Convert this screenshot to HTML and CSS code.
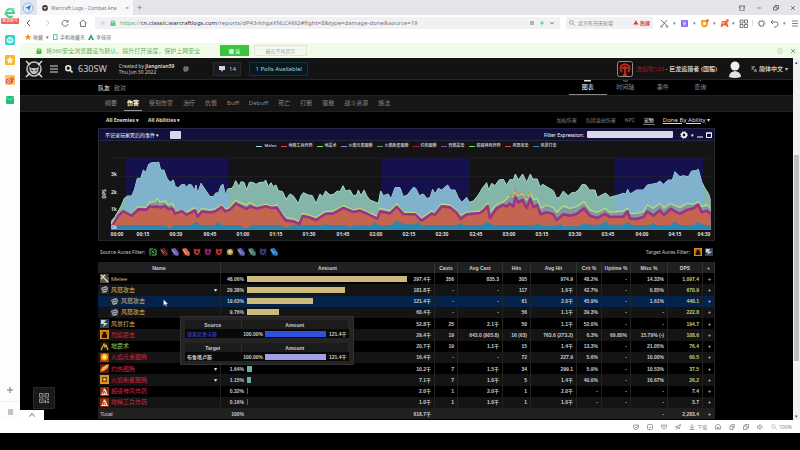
FILE: index.html
```html
<!DOCTYPE html>
<html lang="zh-CN">
<head>
<meta charset="utf-8">
<meta name="viewport" content="width=device-width, initial-scale=1">
<title>Warcraft Logs - Combat Analysis</title>
<link rel="stylesheet" href="styles.css">
</head>
<body>
<svg class="defs" aria-hidden="true">
  <symbol id="i-search" viewBox="0 0 10 10"><circle cx="4" cy="4" r="3" fill="none" stroke="currentColor"/><path d="M6.3 6.3 9.4 9.4" stroke="currentColor"/></symbol>
  <symbol id="i-aura1" viewBox="0 0 8 8"><rect width="8" height="8" fill="#1b2418"/><path d="M1 7V1h3M5 2h2v5H3" stroke="currentColor" fill="none"/><path d="M3 3l2 2" stroke="#aaa"/></symbol>
  <symbol id="i-aura2" viewBox="0 0 8 8"><rect width="8" height="8" fill="#120c10"/><path d="M0 1 4 0 8 5 7 8 3 7z" fill="currentColor"/><path d="M1 2l3 3" stroke="#ddd" opacity=".6"/></symbol>
  <symbol id="i-aura3" viewBox="0 0 8 8"><rect width="8" height="8" fill="#150a0c"/><path d="M1 1h2l1 1 1-1h2v3L5 7H3L1 5z" fill="currentColor"/><path d="M3 3h2v2H3z" fill="#201030"/></symbol>
  <symbol id="i-aura4" viewBox="0 0 8 8"><rect width="8" height="8" fill="#14100a"/><circle cx="4" cy="4" r="3" fill="currentColor"/><circle cx="4" cy="3.5" r="1.3" fill="#fff" opacity=".6"/></symbol>
  <symbol id="i-fist" viewBox="0 0 9 9"><rect width="9" height="9" fill="#20242a"/><path d="M1 3 6 1l2 2-1 4-4 1z" fill="#a8aeb6"/><path d="M2 4 7 3M3 6l4-1" stroke="#333" stroke-width=".8"/></symbol>
  <symbol id="i-sword" viewBox="0 0 9 9"><rect width="9" height="9" fill="#5c5547"/><path d="M1 1 8 8M1 5l4-4" stroke="#ddd6be" stroke-width="1.3"/><path d="M6 1h3v3z" fill="#282018"/></symbol>
  <symbol id="i-flame" viewBox="0 0 9 9"><rect width="9" height="9" fill="#c96d12"/><path d="M2 8V5l1-1V2h3v2l1 1v3z" fill="#211005"/><path d="M0 0h9v9H0z" fill="none" stroke="#f0a82a"/></symbol>
  <symbol id="i-quake" viewBox="0 0 9 9"><rect width="9" height="9" fill="#18150a"/><path d="M1 8 4 2l1 3 1-2 2 5" fill="none" stroke="#d4b93c" stroke-width="1.2"/></symbol>
  <symbol id="i-storm" viewBox="0 0 9 9"><rect width="9" height="9" fill="#344252"/><path d="M1 1h5L4 4h4L3 8l1-3H1z" fill="#c9d4e2"/></symbol>
  <symbol id="i-elem" viewBox="0 0 9 9"><rect width="9" height="9" fill="#a33b06"/><circle cx="4.500" cy="4" r="3.500" fill="#f5a91d"/><circle cx="4.500" cy="4" r="1.700" fill="#fff09a"/></symbol>
  <symbol id="i-sear" viewBox="0 0 9 9"><rect width="9" height="9" fill="#5b1d0a"/><path d="M0 8 2 3 6 1l3-1-1 4-4 3z" fill="#ef8b3a"/><path d="M2 6 7 2" stroke="#ffd99a"/></symbol>
  <symbol id="i-nova" viewBox="0 0 9 9"><rect width="9" height="9" fill="#d9962a"/><rect x="2" y="2" width="5" height="5" fill="#7a480f"/><circle cx="4.500" cy="4.500" r="1.300" fill="#f7cd5c"/></symbol>
  <symbol id="i-bomb" viewBox="0 0 9 9"><rect width="9" height="9" fill="#8e2a10"/><path d="M1 8 3 4 4 1 6 3 8 8z" fill="#f0dcc0"/><path d="M3 7 4 4l2 3" stroke="#b0421c" fill="none"/></symbol>
</svg>

<div class="browser">
  <aside class="side">
    <svg class="side-logo" viewBox="0 0 12 11"><path d="M2 6h8a4 4 0 1 0-1.200 2.900" fill="none" stroke="#46cf8c" stroke-width="2"/><path d="M0 8Q1 3 11 1" fill="none" stroke="#8be0b4"/></svg>
    <span class="side-tag">登录账号</span>
    <svg class="side-ico" viewBox="0 0 12 12"><rect x="1" y="1" width="10" height="10" rx="2" fill="#2fcfc3"/><path d="M6 2.500 9.500 5v3L6 9.700 2.500 8V5z" fill="#c9fbf2"/><path d="M4 6h4" stroke="#2fcfc3"/></svg>
    <svg class="side-ico" viewBox="0 0 12 12"><rect x="1" y="1" width="10" height="10" rx="1" fill="#fbb72b"/><path d="m6 2.500 1.100 2.400 2.500.300-1.900 1.700.5 2.600L6 8.200 3.800 9.500l.5-2.600-1.900-1.700 2.500-.3z" fill="#fff"/></svg>
    <svg class="side-ico" viewBox="0 0 12 12"><rect x="1" y="1" width="10" height="10" rx="1" fill="#fbc56c"/><ellipse cx="5.500" cy="7" rx="3.500" ry="2.700" fill="#e5493a"/><circle cx="5" cy="7" r="1.700" fill="#fff"/><circle cx="5" cy="7" r=".8" fill="#222"/><path d="M7 3q3 0 2.500 3" stroke="#e5493a" fill="none"/></svg>
    <svg class="side-ico" viewBox="0 0 12 12"><rect x="2" y="2" width="8" height="8" rx="1" fill="#21bd7b"/><path d="m2 3 4 3 4-3" stroke="#7fe6b6" fill="none"/></svg>
    <span class="side-space"></span>
    <button class="side-btn" aria-label="添加"><svg viewBox="0 0 6 6"><path d="M3 0v6M0 3h6" stroke="#777"/></svg></button>
    <button class="side-btn side-list" aria-label="列表"><svg viewBox="0 0 6 6"><path d="M1 1h5M1 3h5M1 5h5" stroke="#888"/></svg></button>
  </aside>

  <div class="main">
    <div class="tabbar">
      <svg class="pin" viewBox="0 0 12 12"><circle cx="6" cy="6" r="5" fill="#d9ecfb" stroke="#8fb9e4"/><path d="M3 6 9 3 7 9 6 6.500z" fill="#2878d4"/></svg>
      <div class="tab"><svg class="i6" viewBox="0 0 6 6"><circle cx="3" cy="3" r="2.900" fill="#333"/><path d="M1 2h4L3 5z" fill="#bbb"/></svg><span class="tab-title">Warcraft Logs - Combat Ana</span><button aria-label="关闭标签">×</button></div>
      <button class="newtab" aria-label="新标签">+</button>
      <div class="winctl">
        <svg class="i6" viewBox="0 0 6 6"><path d="M0 1h6v1H5v4H1V2H0z" fill="none" stroke="#555" stroke-width=".8"/></svg>
        <svg class="i6" viewBox="0 0 6 6"><path d="M1 3h4" stroke="#777" stroke-width=".8"/></svg>
        <svg class="i6" viewBox="0 0 6 6"><path d="M.5 2H4v3H.5zM2 2V.5h3.500V4H4" fill="none" stroke="#555" stroke-width=".8"/></svg>
        <svg class="i6" viewBox="0 0 6 6"><path d="m1 1 4 4M5 1 1 5" stroke="#666" stroke-width=".8"/></svg>
      </div>
    </div>

    <div class="urlbar">
      <div class="navbtns">
        <svg class="i8" viewBox="0 0 8 8"><path d="M5 1 2 4l3 3" fill="none" stroke="#555"/></svg>
        <svg class="i8" viewBox="0 0 8 8"><path d="m3 1 3 3-3 3" fill="none" stroke="#ccc"/></svg>
        <svg class="i8" viewBox="0 0 8 8"><path d="M6.500 2.500A3 3 0 1 0 7 5M7 1v2H5" fill="none" stroke="#555" stroke-width=".8"/></svg>
        <svg class="i8" viewBox="0 0 8 8"><path d="M.5 4 4 1l3.500 3M1.500 3.500v4h5v-4" fill="none" stroke="#555" stroke-width=".8"/></svg>
      </div>
      <div class="address">
        <svg class="i6" viewBox="0 0 6 6"><circle cx="3" cy="3" r="2" fill="#cfdaf2"/></svg>
        <svg class="i6" viewBox="0 0 6 6"><rect x=".5" y="2.500" width="5" height="3.500" fill="#5ec79a"/><path d="M1.500 3V1h3v2" fill="none" stroke="#5ec79a"/></svg>
        <span class="url"><span class="url-s">https://</span><b>cn.classic.warcraftlogs.com</b>/reports/dP43rkhgaXNLCAM2#fight=8&amp;type=damage-done&amp;source=19</span>
        <svg class="i6" viewBox="0 0 6 6"><rect x="1" y="1" width="4" height="4" fill="#b3b3b3"/></svg>
        <svg class="i6" viewBox="0 0 6 6"><path d="M4 0 1 3.500h2L2 6l3-3.500H3z" fill="#2fc48c"/></svg>
        <svg class="i6" viewBox="0 0 6 6"><path d="m1 2 2 2 2-2" fill="none" stroke="#666" stroke-width=".8"/></svg>
      </div>
      <div class="search"><svg class="i6 grey"><use href="#i-search"/></svg><input aria-label="搜索" value="北京昨日无新增"><span class="hot"><svg class="i6" viewBox="0 0 6 6"><path d="M0 5 2 2l1-2 .7 2L6 5 3.500 4 3 6 2 4z" fill="#e5352e"/></svg>热搜</span></div>
      <div class="tools">
        <svg class="i9" viewBox="0 0 9 9"><path d="m1 1 6 6M7 1 2 7" stroke="#555" stroke-width=".8"/><circle cx="1.500" cy="7.500" r="1" fill="none" stroke="#555" stroke-width=".6"/><circle cx="7" cy="7.500" r="1" fill="none" stroke="#555" stroke-width=".6"/></svg><i>▾</i>
        <svg class="i9" viewBox="0 0 9 9"><rect x="1" y="1" width="7" height="7" rx="1" fill="#8b6be8"/><path d="M3 3h3M3 4.500h3M3 6h3" stroke="#fff" stroke-width=".7"/></svg><i>▾</i>
        <svg class="i9" viewBox="0 0 9 9"><path d="M1 1h7v4Q8 8 4.500 8.500 1 8 1 5z" fill="#fba41d"/><circle cx="4.500" cy="4.500" r="1.600" fill="#fff"/><circle cx="7.500" cy="1.500" r="1.200" fill="#ef4b2d"/></svg><i>▾</i>
        <svg class="i9" viewBox="0 0 9 9"><path d="M2 2h5l1.500 6H7L6 6.500H3L2 8H.5z" fill="#f1652b"/><path d="M2.500 4h2" stroke="#fff"/><circle cx="7.500" cy="1.500" r="1.200" fill="#ef4b2d"/></svg><i>▾</i>
        <svg class="i9" viewBox="0 0 9 9"><path d="M1 1h3v3H1zM5.500 1h3v3h-3zM1 5.500h3v3H1zM5.500 5.500h3v3h-3z" fill="none" stroke="#555" stroke-width=".8"/></svg>
        <span class="bar"></span>
        <svg class="i9" viewBox="0 0 9 9"><circle cx="4.500" cy="4.500" r="2.500" fill="none" stroke="#555" stroke-width=".8"/><circle cx="4.500" cy="4.500" r="3.500" fill="none" stroke="#777" stroke-dasharray="1 1.750"/></svg>
        <svg class="i9" viewBox="0 0 9 9"><path d="M3 1 1 3l2 2M1 3h5q2 0 2 2T6 8H4" fill="none" stroke="#555" stroke-width=".8"/></svg><i>▾</i>
        <svg class="i9" viewBox="0 0 9 9"><path d="M2 2h6M2 4.500h6M2 7h6" stroke="#666" stroke-width=".8"/></svg>
      </div>
    </div>

    <div class="bookmarks">
      <a href="#"><svg class="i6" viewBox="0 0 6 6"><path d="m3 0 1 2 2 .200L4.500 3.700 5 6 3 4.800 1 6l.500-2.300L0 2.200 2 2z" fill="#f78b1f"/></svg>收藏</a><span class="dot">▾</span>
      <a href="#"><svg class="i6" viewBox="0 0 6 6"><rect x="1.500" y=".5" width="3.500" height="5" fill="none" stroke="#58c99a"/></svg>手机收藏夹</a>
      <a href="#"><svg class="i6" viewBox="0 0 6 6"><path d="M0 6 3 0l3 6H4L3 3.500 2 6z" fill="#23a95c"/></svg>李佳琦</a>
    </div>

    <div class="notice">
      <svg class="i6" viewBox="0 0 6 6"><rect x=".5" y="2.500" width="5" height="3.500" fill="#3eb84d"/><path d="M1.500 3V1h3v2" fill="none" stroke="#3eb84d"/></svg>
      <span class="notice-text">将360安全浏览器设为默认，提升打开速度，保护上网安全</span>
      <button class="yes">确 认</button><button class="no">最近不再提示</button>
      <span class="notice-end"><svg class="i6" viewBox="0 0 6 6"><circle cx="3" cy="3" r="2.500" fill="none" stroke="#bbccb4" stroke-width=".8"/><path d="M3 1.500v3" stroke="#bbccb4" stroke-width=".8"/></svg><svg class="i6" viewBox="0 0 6 6"><path d="m1 1 4 4M5 1 1 5" stroke="#4fb884"/></svg></span>
    </div>

    <div class="viewport">
      <div class="page">
        <header class="top">
          <svg class="logo" viewBox="0 0 18 18"><circle cx="9" cy="9" r="7" fill="#1b1b1b" stroke="#c5c5c5" stroke-width="1.500"/><path d="m1 1 4 4M17 1l-4 4M1 17l4-4M17 17l-4-4" stroke="#ddd" stroke-width="1.500"/><path d="M4 6.500 6 8h6l2-1.500-1 5-2 2.500H7l-2-2.500z" fill="#bdbdbd"/><path d="M6 9.500 8 11M12 9.500 10 11M7 5h4" stroke="#222"/></svg>
          <svg class="i8 white" viewBox="0 0 8 8"><path d="M0 1h8M0 4h8M0 7h8" stroke="#ddd"/></svg>
          <svg class="i8 white bold"><use href="#i-search"/></svg>
          <span class="report">630SW</span>
          <span class="created">Created by <b>jiangnian59</b><br>Thu Jun 30 2022</span>
          <svg class="i6" viewBox="0 0 6 6"><path d="M1 1h4v3L4 5H1z" fill="#333" stroke="#aaa" stroke-width=".8"/><path d="M2 3h2" stroke="#ddd" stroke-width=".8"/></svg>
          <button class="chat"><svg class="i6" viewBox="0 0 6 6"><path d="M0 0h6v4H4L3 6 2 4H0z" fill="#d5d0ee"/></svg>14</button>
          <button class="polls">1 Polls Available!</button>
          <div class="who">
            <svg class="crest" viewBox="0 0 16 16"><rect x=".5" y=".5" width="15" height="15" rx="2" fill="#1c0808" stroke="#8d8d8d"/><path d="M5 11a4.500 4.500 0 1 1 6 0" fill="none" stroke="#b52b1c" stroke-width="2"/><path d="M8 5v9M5 7h2M9 7h2M6 14h4" stroke="#d83b26" stroke-width="1.500"/></svg>
            <span><span class="guild">洗剪吹123</span> - <b>巨龙追猎者 (国服)</b></span>
            <svg class="avatar" viewBox="0 0 16 18"><circle cx="8" cy="6" r="4.500" fill="#f0f0f0"/><path d="M2 17q0-5 6-6 6 1 6 6-6 2-12 0z" fill="#e2e2e2"/></svg>
            <a href="#" class="lang"><svg class="i6" viewBox="0 0 6 6"><path d="M0 1h4M2 0v1M.5 4 3 1M1 2l2 2M3 6l1.500-3L6 6M3.500 5h2" fill="none" stroke="#bbb" stroke-width=".7"/></svg><b>简体中文</b>▾</a>
          </div>
        </header>

        <div class="strip"><div class="wrap row1">
          <a href="#" class="on">队友</a><a href="#">敌对</a>
          <nav class="views">
            <a href="#" class="on"><svg viewBox="0 0 9 3"><path d="M1 0h7v1.500H1z" fill="#ddd"/></svg>图表</a>
            <a href="#"><svg viewBox="0 0 9 3"><path d="M2 0q2.500 3 5 0" fill="none" stroke="#888"/></svg>时间轴</a>
            <a href="#"><svg viewBox="0 0 9 3"></svg>事件</a>
            <a href="#"><svg viewBox="0 0 9 3"><path d="M4 0h1v1H4z" fill="#888"/></svg>查询</a>
          </nav>
        </div></div>

        <div class="strip types"><nav class="wrap row2">
          <a href="#">摘要</a><a href="#" class="on">伤害</a><a href="#">受到伤害</a><a href="#">治疗</a><a href="#">仇恨</a><a href="#">Buff</a><a href="#">Debuff</a><a href="#">死亡</a><a href="#">打断</a><a href="#">驱散</a><a href="#">战斗资源</a><a href="#">施法</a>
        </nav></div>

        <div class="wrap row3">
          <button>All Enemies ▾</button><button>All Abilities ▾</button>
          <div class="opts"><a href="#">加权伤害</a><a href="#">包括溢出伤害</a><a href="#">NPC</a><a href="#" class="on">宠物</a><a href="#" class="by"><u>Done By Ability</u> ▾</a></div>
        </div>

        <section class="wrap panel">
          <div class="panel-head">
            <button>不记录玩家死后的事件 ▾</button><input class="mini" aria-label="事件">
            <label for="expr">Filter Expression:</label><input id="expr" class="expr">
            <svg class="i8" viewBox="0 0 8 8"><circle cx="4" cy="4" r="2.200" fill="none" stroke="#fff" stroke-width="1.600"/><circle cx="4" cy="4" r="3.300" fill="none" stroke="#fff" stroke-dasharray="1.300 1.300"/></svg><span class="caret">▾</span>
            <svg class="i6" viewBox="0 0 6 6"><path d="M0 5h6" stroke="#fff"/></svg>
            <svg class="i6" viewBox="0 0 6 6"><path d="M.5 1h5v4.500h-5zM0 1h6" fill="none" stroke="#fff"/></svg>
          </div>
          <ul class="legend">
            <li class="k1">Melee</li><li class="k2">地精工兵炸药</li><li class="k3">地震术</li><li class="k4">火焰元素图腾</li><li class="k5">火焰新星图腾</li><li class="k6">灼热图腾</li><li class="k7">烈焰震击</li><li class="k3">超级神风炸药</li><li class="k2">风怒攻击</li><li class="k8">风暴打击</li>
          </ul>
          <svg class="chart" viewBox="0 0 617 90">
            <defs>
              <clipPath id="total"><path d="M63 290 75 275 85 258 95 240 103 220 112 213 125 213 133 195 142 160 152 160 160 135 168 142 176 118 185 113 200 113 206 111 212 135 222 135 230 158 240 172 250 165 256 185 265 188 273 180 283 178 289 187 297 178 305 180 313 197 318 180 323 205 333 175 343 190 350 200 360 215 370 215 378 203 385 205 393 182 399 178 406 210 413 192 416 190V314H63z M874 198 880 212 895 207 903 222 915 188 930 188 940 215 952 210 970 187 977 190 988 212 1000 207 1010 220 1020 218 1028 193 1035 207 1045 190 1055 195 1073 180 1082 195 1095 195 1105 218 1115 232 1130 217 1138 232V314H874z M1574 213 1585 210 1600 205 1608 207 1613 193 1620 207 1640 195 1660 195 1672 180 1700 175 1710 168 1720 178 1735 165 1747 165 1755 140 1770 155 1780 152 1795 155 1805 138 1818 137 1825 133 1835 170 1840 180V314H1574z"/></clipPath>
              <clipPath id="plot"><path d="M63 99H1862V314H63z"/></clipPath>
            </defs>
            <g transform="translate(-8 -26) scale(.333333)">
              <path class="phase" d="M107 99H416V314H107zM874 99H1138V314H874zM1574 99H1840V314H1574z"/>
              <path class="gridline" d="M63 99H1862M63 155H1862M63 208H1862M63 261H1862"/>
              <g clip-path="url(#plot)">
                <path class="melee" d="M63 330V290L75 275 85 258 95 240 103 220 112 213 125 213 133 195 142 160 152 160 160 135 168 142 176 118 185 113 200 113 206 111 212 135 222 135 230 158 240 172 250 165 256 185 265 188 273 180 283 178 289 187 297 178 305 180 313 197 318 180 323 205 333 175 343 190 350 200 360 215 370 215 378 203 385 205 393 182 399 178 406 210 413 192 425 190 431 182 437 167 447 185 453 170 462 172 470 195 478 172 488 172 498 178 510 172 520 172 527 165 535 185 543 173 550 185 558 180 565 197 578 200 588 223 600 207 610 213 625 235 633 213 640 203 655 210 667 212 678 235 690 207 698 215 707 198 720 210 730 208 742 198 750 200 759 182 767 198 780 195 790 212 800 210 805 195 813 212 822 195 830 212 840 225 865 235 872 198 880 212 895 207 903 222 915 188 930 188 940 215 952 210 970 187 977 190 988 212 1000 207 1010 220 1020 218 1028 193 1035 207 1045 190 1055 195 1073 180 1082 195 1095 195 1105 218 1115 232 1130 217 1138 232 1150 228 1165 210 1178 188 1190 173 1196 195 1205 175 1215 182 1227 165 1240 163 1250 180 1260 163 1270 165 1276 147 1285 165 1298 147 1310 172 1321 147 1328 162 1342 162 1350 185 1358 178 1370 185 1390 197 1400 220 1410 215 1420 198 1435 213 1445 203 1455 203 1465 195 1477 178 1488 180 1498 195 1515 195 1522 217 1535 210 1547 204 1560 217 1585 210 1600 205 1608 207 1613 193 1620 207 1640 195 1660 195 1672 180 1700 175 1710 168 1720 178 1735 165 1747 165 1755 140 1770 155 1780 152 1795 155 1805 138 1818 137 1825 133 1835 170 1845 190 1855 205 1862 225V330z"/>
                <path class="melee-phase" clip-path="url(#total)" d="M107 99H416V314H107zM874 99H1138V314H874zM1574 99H1840V314H1574z"/>
                <path id="abil" class="quake" d="M50 340 63 297 85 270 100 258 125 268 145 245 170 248 178 232 195 230 202 220 210 232 225 228 235 240 248 235 255 260 275 255 290 262 315 248 323 268 335 250 360 255 375 252 395 240 405 252 420 248 437 225 455 235 470 240 480 232 500 245 527 238 545 245 560 240 575 262 588 278 610 282 628 290 638 265 655 270 678 278 705 260 730 258 760 242 790 255 810 250 835 262 862 275 870 250 900 258 920 237 940 262 975 262 995 280 1025 258 1035 262 1055 237 1080 240 1100 258 1112 270 1130 262 1170 258 1185 245 1193 235 1200 262 1220 238 1240 230 1250 222 1258 212 1270 215 1276 198 1285 212 1298 205 1310 225 1321 202 1330 225 1342 220 1352 250 1370 240 1390 248 1400 262 1420 243 1440 250 1460 245 1482 230 1500 255 1522 262 1545 250 1560 262 1600 258 1613 250 1620 265 1640 265 1660 260 1672 240 1690 250 1710 235 1722 250 1742 235 1755 242 1770 248 1790 235 1810 237 1825 230 1835 245 1850 240 1862 248 1880 340z"/>
                <path class="windfury" transform="translate(0 12)" d="M50 340 63 297 85 260 100 247 125 260 145 241 170 242 178 232 195 234 202 232 210 236 225 231 235 240 248 239 255 254 275 246 290 257 315 244 323 263 335 248 360 250 375 248 395 234 405 247 420 242 437 224 455 233 470 240 480 232 500 238 527 232 545 237 560 235 575 258 588 275 610 277 628 285 638 261 655 264 678 273 705 255 730 253 760 237 790 249 810 245 835 256 862 269 870 247 900 253 920 233 940 255 975 256 995 275 1025 254 1035 257 1055 232 1080 235 1100 251 1112 270 1130 256 1170 252 1185 240 1193 231 1200 268 1220 238 1240 228 1250 233 1258 224 1270 232 1276 205 1285 220 1298 213 1310 237 1321 210 1330 235 1342 228 1352 256 1370 250 1390 256 1400 273 1420 256 1440 260 1460 255 1482 238 1500 260 1522 267 1545 255 1560 264 1600 263 1613 247 1620 269 1640 270 1660 264 1672 248 1690 260 1710 244 1722 258 1742 239 1755 247 1770 254 1790 243 1810 238 1825 227 1835 250 1850 245 1862 253 1880 340z"/>
                <path class="storm" d="M63 320V300H220L232 303 240 312 250 300H305L318 290 330 300H375L385 290 395 300H450L460 309 475 309 482 300H570L590 309 605 300H700L707 296 715 300H770L780 307 790 301H845L855 290 865 300H903L920 288 945 298H975L984 290 992 300H1100L1110 295 1120 300H1175L1193 290 1210 300H1330L1345 297 1360 302H1400L1412 297 1420 304H1470L1480 295 1500 299H1530L1547 289 1560 299H1600L1613 291 1625 300H1680L1690 295 1700 300H1740L1755 290 1770 300H1810L1825 290 1840 300H1862V320z"/>
                <path class="bursts" d="M1258 210 1270 215 1276 193 1285 210 1298 200 1310 222 1321 200"/>
              </g>
            </g>
            <g class="axis">
              <text x="13" y="25">3k</text><text x="13" y="43">2k</text><text x="13" y="60">1k</text><text x="13" y="78">0k</text>
              <text class="dps" transform="translate(8 43) rotate(-90)">DPS</text>
            </g>
            <g class="axis ticks">
              <text x="19" y="85">00:00</text><text x="45" y="85">00:15</text><text x="78" y="85">00:30</text><text x="112" y="85">00:45</text><text x="145" y="85">01:00</text><text x="178" y="85">01:15</text><text x="211" y="85">01:30</text><text x="245" y="85">01:45</text><text x="278" y="85">02:00</text><text x="311" y="85">02:15</text><text x="344" y="85">02:30</text><text x="378" y="85">02:45</text><text x="411" y="85">03:00</text><text x="444" y="85">03:15</text><text x="477" y="85">03:30</text><text x="510" y="85">03:45</text><text x="544" y="85">04:00</text><text x="577" y="85">04:15</text><text x="606" y="85">04:30</text>
            </g>
          </svg>
        </section>

        <div class="wrap auras">
          <span>Source Auras Filter:</span>
          <div class="aura-list">
            <svg class="a1"><use href="#i-aura1"/></svg><svg class="a2"><use href="#i-aura2"/></svg><svg class="a3"><use href="#i-aura2"/></svg><svg class="a4"><use href="#i-aura2"/></svg><svg class="a5"><use href="#i-aura3"/></svg><svg class="a6"><use href="#i-aura3"/></svg><svg class="a7"><use href="#i-aura3"/></svg><svg class="a8"><use href="#i-aura4"/></svg><svg class="a3"><use href="#i-aura2"/></svg><svg class="a9"><use href="#i-aura2"/></svg><svg class="a10"><use href="#i-aura3"/></svg><svg class="a11"><use href="#i-aura2"/></svg>
          </div>
          <span class="target">Target Auras Filter:</span>
          <div class="aura-list"><svg><use href="#i-flame"/></svg><svg><use href="#i-storm"/></svg></div>
        </div>

        <div class="wrap tablebox">
          <table class="data">
            <colgroup><col class="c-name"><col class="c-amount"><col class="c-casts"><col class="c-cast"><col class="c-hits"><col class="c-hit"><col class="c-crit"><col class="c-up"><col class="c-miss"><col class="c-dps"><col class="c-plus"></colgroup>
            <thead><tr><th>Name</th><th>Amount</th><th>Casts</th><th>Avg Cast</th><th>Hits</th><th>Avg Hit</th><th>Crit %</th><th>Uptime %</th><th>Miss %</th><th>DPS</th><th>+</th></tr></thead>
            <tbody>
              <tr><td><div class="n phys"><svg><use href="#i-sword"/></svg>Melee</div></td><td><div class="amt"><span>48.06%</span><i class="meter"><i style="width:100%"></i></i><span>297.4千</span></div></td><td>356</td><td>835.3</td><td>305</td><td>974.9</td><td>48.2%</td><td>-</td><td>14.33%</td><td>1,097.4</td><td>+</td></tr>
              <tr><td><div class="n phys"><svg><use href="#i-fist"/></svg>风怒攻击<span class="open">▾</span></div></td><td><div class="amt"><span>29.38%</span><i class="meter"><i style="width:61%"></i></i><span>181.8千</span></div></td><td>-</td><td>-</td><td>117</td><td>1.6千</td><td>42.7%</td><td>-</td><td>0.85%</td><td>670.9</td><td>+</td></tr>
              <tr class="hover"><td><div class="n phys sub"><svg><use href="#i-fist"/></svg>风怒攻击</div></td><td><div class="amt"><span>19.63%</span><i class="meter"><i style="width:41%"></i></i><span>121.4千</span></div></td><td>-</td><td>-</td><td>61</td><td>2.0千</td><td>45.9%</td><td>-</td><td>1.61%</td><td>448.1</td><td>+</td></tr>
              <tr class="alt"><td><div class="n phys sub"><svg><use href="#i-fist"/></svg>风怒攻击</div></td><td><div class="amt"><span>9.76%</span><i class="meter"><i style="width:20%"></i></i><span>60.4千</span></div></td><td>-</td><td>-</td><td>56</td><td>1.1千</td><td>39.3%</td><td>-</td><td>-</td><td>222.8</td><td>+</td></tr>
              <tr><td><div class="n phys"><svg><use href="#i-storm"/></svg>风暴打击</div></td><td><div class="amt"><span>8.53%</span><i class="meter"><i style="width:18%"></i></i><span>52.8千</span></div></td><td>25</td><td>2.1千</td><td>50</td><td>1.1千</td><td>52.0%</td><td>-</td><td>-</td><td>194.7</td><td>+</td></tr>
              <tr><td><div class="n fire"><svg><use href="#i-flame"/></svg>烈焰震击</div></td><td><div class="amt"><span>4.76%</span><i class="meter"><i style="width:10%"></i></i><span>29.4千</span></div></td><td>19</td><td>643.0 (905.8)</td><td>16 (63)</td><td>763.6 (273.2)</td><td>6.3%</td><td>69.80%</td><td>15.79% (-)</td><td>108.6</td><td>+</td></tr>
              <tr><td><div class="n nature"><svg><use href="#i-quake"/></svg>地震术</div></td><td><div class="amt"><span>3.35%</span><i class="meter"><i style="width:7%"></i></i><span>20.7千</span></div></td><td>19</td><td>1.1千</td><td>15</td><td>1.4千</td><td>13.3%</td><td>-</td><td>21.05%</td><td>76.4</td><td>+</td></tr>
              <tr><td><div class="n fire"><svg><use href="#i-elem"/></svg>火焰元素图腾</div></td><td><div class="amt pet"><span>2.65%</span><i class="meter"><i style="width:6%"></i></i><span>16.4千</span></div></td><td>-</td><td>-</td><td>72</td><td>227.9</td><td>5.6%</td><td>-</td><td>10.00%</td><td>60.5</td><td>+</td></tr>
              <tr><td><div class="n fire"><svg><use href="#i-sear"/></svg>灼热图腾<span class="open">▾</span></div></td><td><div class="amt pet"><span>1.64%</span><i class="meter"><i style="width:3.400%"></i></i><span>10.2千</span></div></td><td>7</td><td>1.5千</td><td>34</td><td>299.1</td><td>5.9%</td><td>-</td><td>10.53%</td><td>37.5</td><td>+</td></tr>
              <tr><td><div class="n fire"><svg><use href="#i-nova"/></svg>火焰新星图腾<span class="open">▾</span></div></td><td><div class="amt pet"><span>1.15%</span><i class="meter"><i style="width:2.400%"></i></i><span>7.1千</span></div></td><td>7</td><td>1.0千</td><td>5</td><td>1.4千</td><td>40.0%</td><td>-</td><td>16.67%</td><td>26.2</td><td>+</td></tr>
              <tr><td><div class="n fire"><svg><use href="#i-bomb"/></svg>超级神风炸药</div></td><td><div class="amt bomb"><span>0.32%</span><i class="meter"><i style="width:.7%"></i></i><span>2.0千</span></div></td><td>1</td><td>2.0千</td><td>1</td><td>2.0千</td><td>-</td><td>-</td><td>-</td><td class="plain">7.4</td><td>+</td></tr>
              <tr><td><div class="n fire"><svg><use href="#i-bomb"/></svg>地精工兵炸药</div></td><td><div class="amt bomb"><span>0.16%</span><i class="meter"><i style="width:.4%"></i></i><span>1.0千</span></div></td><td>1</td><td>1.0千</td><td>1</td><td>1.0千</td><td>-</td><td>-</td><td>-</td><td class="plain">3.7</td><td>+</td></tr>
            </tbody>
            <tfoot><tr><td><div class="n">Total</div></td><td><div class="amt"><span>100%</span><i class="meter"></i><span>618.7千</span></div></td><td></td><td></td><td></td><td></td><td></td><td></td><td>-</td><td>2,283.4</td><td>+</td></tr></tfoot>
          </table>

          <div class="tip">
            <table><thead><tr><th>Source</th><th>Amount</th></tr></thead><tbody><tr><td class="src">德莱尼恩卡斯</td><td><div class="amt"><span>100.00%</span><i class="meter blue"></i><span>121.4千</span></div></td></tr></tbody></table>
            <table><thead><tr><th>Target</th><th>Amount</th></tr></thead><tbody><tr><td>布鲁塔卢斯</td><td><div class="amt"><span>100.00%</span><i class="meter lilac"></i><span>121.4千</span></div></td></tr></tbody></table>
          </div>
          <svg class="pointer" viewBox="0 0 6 8"><path d="M.5.5v6l1.500-1.200L3 7.500l1-.5-1-2h2z" fill="#fff" stroke="#456" stroke-width=".4"/></svg>
        </div>
        <div class="qr"><svg viewBox="0 0 11 11"><path d="M.5.5h4v4h-4zM6.500.5h4v4h-4zM.5 6.500h4v4h-4z" fill="none" stroke="#999"/><path d="M2 2h1v1H2zM8 2h1v1H8zM2 8h1v1H2zM6 6h2v1H6zM9 6h2v2H9zM6 8h2v3H6zM9 9h2v2H9z" fill="#999"/></svg></div>
        <button class="pop" aria-label="展开"><svg viewBox="0 0 6 4"><path d="m.5 3.500 2.500-3 2.500 3" fill="none" stroke="#666"/></svg></button>
      </div>
      <div class="scroll"><span>▴</span><i></i><span>▾</span></div>
    </div>
  </div>
</div>

<footer class="status">
  <svg viewBox="0 0 6 6"><path d="M.5 1h5v2q0 2-2.500 3Q.5 5 .5 3z"/><path d="m2 3 1 1 2-2"/></svg>
  <svg viewBox="0 0 6 6"><rect x=".5" y=".5" width="5" height="5" rx="1"/><path d="M2 3q1 2 2 0"/></svg>
  <svg viewBox="0 0 6 6"><path d="M3 5.500.5 3V1h2L3 2l.5-1h2v2z"/><path d="M2 3h2"/></svg>
  <svg viewBox="0 0 6 6"><path d="M.5 3 5.500.5 4 5 3 3.500zM3 3.500 1 5.500"/></svg>
  <span class="dl"><svg viewBox="0 0 6 6"><path d="M3 0v4M1 2.500l2 2 2-2M.5 5.500h5"/></svg>下载</span>
  <svg viewBox="0 0 6 6"><path d="M.5 5V3a2.500 2.500 0 0 1 5 0v2zM2 5V3.500h2V5"/></svg>
  <svg viewBox="0 0 6 6"><path d="M1 2h3v3.500H1zM2 2l1-1.500h2.500L5 4H4"/></svg>
  <svg viewBox="0 0 6 6"><path d="M.5 2h3.500v3.500H.5zM2 2V.5h3.500V4H4"/></svg>
  <svg viewBox="0 0 6 6"><path d="M.5 2h1L3 .5v5L1.500 4h-1zM4.500 1.500q1.500 1.500 0 3"/></svg>
  <span class="dl zoom"><svg><use href="#i-search"/></svg>100%</span>
</footer>
</body>
</html>
```
FILE: styles.css
```css
* { box-sizing: border-box; }
body { margin: 0; background: #000; font: 6px/8px "Noto Sans", "Noto Sans CJK SC", sans-serif; color: #ccc; }
button, input { font: inherit; color: inherit; border: 0; padding: 0; margin: 0; background: none; }
a { color: inherit; text-decoration: none; }
svg { display: block; flex: none; }
i { font-style: normal; }
.defs { position: absolute; width: 0; height: 0; }
.i6 { width: 6px; height: 6px; }
.i8 { width: 8px; height: 8px; }
.i9 { width: 9px; height: 9px; }
.grey { color: #777; }
.white { color: #e4e4e4; }
.bold { stroke-width: 2; }

.browser { display: flex; }
.side { width: 20px; background: #fdfdfd; display: flex; flex-direction: column; align-items: center; padding: 7px 0 5px; }
.side-logo { width: 12px; height: 11px; }
.side-tag { background: #f0614f; color: #fff; font-size: 4px; line-height: 6px; padding: 0 1px; border-radius: 1px; margin-bottom: 10px; }
.side-ico { width: 12px; height: 12px; margin-bottom: 8px; }
.side-space { flex: 1; }
.side-btn { padding: 8px 7px; }
.side-btn svg { width: 6px; height: 6px; }
.side-list { padding: 7px 7px 0; border-top: 1px solid #eee; }
.main { flex: 1; min-width: 0; }

.tabbar { height: 15px; background: #e4e4ea; display: flex; align-items: center; color: #777; }
.pin { width: 12px; height: 12px; margin: 0 3px 0 2px; }
.tab { height: 15px; width: 96px; background: #f8f8fa; display: flex; align-items: center; gap: 3px; padding: 0 4px 0 5px; }
.tab-title { flex: 1; white-space: nowrap; font-size: 5px; }
.newtab { font-size: 9px; margin-left: 4px; }
.winctl { margin-left: auto; display: flex; gap: 11px; padding-right: 4px; }

.urlbar { height: 16px; background: #fff; display: flex; align-items: center; color: #777; }
.navbtns { display: flex; gap: 10px; width: 75px; padding-left: 5px; }
.address { flex: 1; min-width: 0; height: 12px; background: #f1f1f4; display: flex; align-items: center; gap: 4px; padding: 0 5px; }
.url { flex: 1; overflow: hidden; white-space: nowrap; }
.url b { font-weight: 400; color: #333; }
.url-s { color: #43bf8a; }
.search { width: 87px; height: 12px; margin: 0 7px 0 6px; background: #f1f1f4; display: flex; align-items: center; gap: 3px; padding: 0 3px; font-size: 5px; }
.search input { flex: 1; min-width: 0; color: #888; }
.hot { color: #e5352e; font-weight: 700; display: flex; align-items: center; gap: 1px; }
.tools { display: flex; align-items: center; justify-content: space-between; width: 140px; padding-right: 1px; font-size: 5px; }
.bar { width: 1px; height: 6px; background: #ddd; }

.bookmarks { height: 12px; background: #fff; color: #666; display: flex; align-items: center; gap: 3px; padding-left: 5px; font-size: 5px; }
.bookmarks a { display: flex; align-items: center; gap: 2px; }
.notice { height: 15px; background: #f1fce8; color: #66ae72; display: flex; align-items: center; padding: 0 4px 0 16px; }
.notice-text { margin: 0 13px 0 4px; width: 161px; white-space: nowrap; }
.notice button { height: 11px; font-size: 5px; }
.yes { width: 29px; background: #3ac43c; color: #fff; font-weight: 700; }
.notice .no { width: 53px; margin-left: 5px; background: #f3f8ef; color: #aaa; border: 1px solid #dde5d8; }
.notice-end { display: flex; gap: 7px; margin-left: auto; }

.viewport { display: flex; }
.page { flex: 1; min-width: 0; position: relative; background: #000; }
.scroll { width: 7px; background: #f1f1f1; color: #555; font-size: 5px; text-align: center; display: flex; flex-direction: column; justify-content: space-between; }
.scroll i { height: 206px; margin: 89px 1px auto; background: #c1c1c1; }
.wrap { width: 80%; max-width: 617px; margin: 0 auto; }

.top { height: 22px; background: #131313; border-bottom: 1px solid #262620; display: flex; align-items: center; padding-left: 5px; white-space: nowrap; }
.logo { width: 18px; height: 18px; margin-right: 7px; }
.top .bold { margin-left: 7px; }
.report { font-size: 9px; margin: 0 12px 0 5px; }
.created { font-size: 5px; line-height: 6px; margin-right: 9px; }
.chat { display: flex; align-items: center; justify-content: center; gap: 4px; width: 28px; height: 14px; margin-left: 24px; background: #1b1b1e; border: 1px solid #2a2a2d; }
.polls { height: 14px; padding: 0 5px; margin-left: 8px; background: #06191f; border: 1px solid #10343d; color: #b4cdd2; }
.who { margin-left: auto; display: flex; align-items: center; padding-right: 5px; }
.crest { width: 16px; height: 16px; margin-right: 3px; }
.guild { color: #a02228; }
.avatar { width: 16px; height: 18px; margin: 0 8px 0 10px; }
.lang { display: flex; align-items: center; gap: 2px; }

.strip { border-bottom: 1px solid #222; color: #888; }
.row1 { height: 15px; display: flex; align-items: center; gap: 4px; }
.strip .on { color: #fff; }
.views { margin: 0 -4px 0 auto; width: 150px; display: grid; grid-template-columns: repeat(4, 1fr); text-align: center; }
.views a { height: 15px; border-bottom: 1px solid transparent; line-height: 9px; }
.views svg { width: 9px; height: 3px; margin: 0 auto; }
.views .on { border-color: #888; }
.types { background: #161616; }
.row2 { display: flex; gap: 4px; padding-left: 4px; }
.row2 a { line-height: 14px; padding: 0 3px; border-bottom: 1px solid transparent; }
.row2 .on { border-color: #999; font-weight: 700; }
.row3 { height: 16px; display: flex; align-items: center; gap: 9px; padding: 0 4px 0 8px; font-size: 5px; }
.row3 button { font-weight: 700; color: #ddd; }
.opts { margin-left: auto; display: flex; gap: 7px; color: #888; }
.opts a { padding: 0 1px; }
.opts .on { color: #fff; border-bottom: 1px solid #777; }
.opts .by { color: #ddd; font-size: 6px; }

.panel { background: #141414; box-shadow: inset 0 0 0 1px #262626; }
.panel-head { height: 13px; background: #12113a; border: 1px solid #26264a; display: flex; align-items: center; gap: 3px; padding: 0 2px 0 6px; color: #fff; font-size: 5px; }
.mini { width: 11px; height: 8px; margin: 0 auto 0 8px; background: #d6d6ec; border-radius: 1px; }
.expr { width: 86px; height: 7px; background: #d6d6ec; border-radius: 1px; }
.panel-head .i8 { margin-left: 4px; }
.legend { margin: 0; padding: 0; list-style: none; height: 10px; display: flex; align-items: center; justify-content: center; gap: 4px; font-size: 4px; font-weight: 700; }
.legend li { display: flex; align-items: center; gap: 2px; }
.legend li::before { content: ""; width: 6px; height: 1px; background: currentColor; }
.legend li { color: #bbb; }
.legend .k1::before { color: #9cd8dc; } .legend .k2::before { color: #d9434f; } .legend .k3::before { color: #8fd44e; }
.legend .k4::before { color: #7d90ba; } .legend .k5::before { color: #788c80; } .legend .k6::before { color: #c3142e; }
.legend .k7::before { color: #71579a; } .legend .k8::before { color: #1f99ad; }
.chart { width: 100%; height: auto; }
.phase { fill: #15104e; }
.gridline { stroke: #262626; stroke-width: 2; }
.melee { fill: #83b5a9; stroke: #a5d8cd; stroke-width: 3; stroke-linejoin: round; }
.melee-phase { fill: #80b2cd; }
.quake { stroke: #b6dc72; stroke-width: 4; stroke-linejoin: round; fill: #8198a2; }
.windfury { fill: #c56550; stroke: #9c3485; stroke-width: 8; stroke-linejoin: round; }
.storm { fill: #2b88ae; }
.bursts { fill: none; stroke: #e86e3c; stroke-width: 4; stroke-dasharray: 8 6; }
.axis { font-size: 5px; font-weight: 700; fill: #ddd; }
.ticks { text-anchor: middle; }
.dps { text-anchor: middle; }

.auras { height: 21px; display: flex; align-items: center; gap: 4px; padding: 0 2px; font-size: 5px; }
.aura-list { display: flex; gap: 3px; }
.aura-list svg { width: 8px; height: 8px; }
.target { margin-left: auto; }
.a1 { color: #4d9c4e; } .a2 { color: #64261e; } .a3 { color: #6b62bd; } .a4 { color: #dc7046; }
.a5 { color: #a83722; } .a6 { color: #8c2260; } .a7 { color: #b3321c; } .a8 { color: #c7a544; }
.a9 { color: #4b7f71; } .a10 { color: #2a3f8a; } .a11 { color: #2f80cc; }

.tablebox { position: relative; font: 5px/8px "Liberation Sans", "Noto Sans CJK SC", sans-serif; font-weight: 700; padding-bottom: 1px; }
table { border-collapse: collapse; table-layout: fixed; width: 100%; }
th, td { padding: 0 3px; text-align: right; white-space: nowrap; border-right: 1px solid #222; }
.data { height: 157px; }
.data th { text-align: center; background: #202020; padding: 0; border-color: #333; }
.data tr { height: 11px; }
.data tbody tr:nth-child(even) { background: #141414; }
.data tbody .hover { background: #03234b; }
.data tfoot { background: #202020; }
.c-name { width: 20%; } .c-amount { width: 214px; } .c-casts { width: 23px; } .c-cast { width: 45px; }
.c-hits { width: 28px; } .c-hit { width: 46px; } .c-crit { width: 25px; } .c-up { width: 29px; }
.c-miss { width: 37px; } .c-dps { width: 35px; } .c-plus { width: 12px; }
.data td:nth-child(10) { color: #c5cf79; }
.data td.plain, .data tfoot td:nth-child(10) { color: #ccc; }
.data td:first-child { padding-left: 2px; }
.n { display: flex; align-items: center; gap: 2px; font-size: 6px; font-weight: 400; }
.n svg { width: 9px; height: 9px; }
.sub { padding-left: 10px; }
.open { margin-left: auto; color: #ddd; }
.phys { color: #cdb971; } .fire { color: #c22c4c; } .nature { color: #8fd86a; }
.amt { display: flex; align-items: center; }
.amt span { width: 20px; }
.meter { flex: 1; height: 6px; margin: 0 4px 0 3px; }
.meter i { display: block; height: 6px; background: #ceba7c; }
.pet i i { background: #5eb3a2; }
.bomb i i { background: #a33a44; }

.tip { position: absolute; left: 82px; top: 54px; width: 174px; padding: 3px 4px; background: #242424; border: 1px solid #303030; display: grid; gap: 5px; }
.tip th { background: #1c1c1c; text-align: center; line-height: 8px; border: 0; border-right: 1px solid #2b2b2b; padding: 0; }
.tip th:first-child { width: 56px; }
.tip td { background: #080808; border: 0; line-height: 8px; padding: 0 2px; height: 9px; }
.tip th { height: 9px; }
.tip td:first-child { text-align: left; }
.tip .src { color: #2c3bad; }
.tip .meter { margin: 0 1px 0 2px; }
.blue { background: #2d50dd; }
.lilac { background: #a2a0e0; }
.pointer { position: absolute; left: 65px; top: 37px; width: 6px; height: 8px; }

.qr { position: absolute; left: 13px; bottom: 11px; padding: 5px; background: #191919; border: 1px solid #2a2a2a; }
.qr svg { width: 10px; height: 10px; }
.pop { position: absolute; left: 0; bottom: 0; width: 24px; height: 10px; background: #fff; display: flex; align-items: center; justify-content: center; }
.pop svg { width: 6px; height: 4px; }

.status { height: 13px; background: #fff; color: #888; display: flex; align-items: center; justify-content: flex-end; gap: 8px; padding-right: 8px; }
.status svg { width: 6px; height: 6px; fill: none; stroke: #888; stroke-width: .8; }
.dl { display: flex; align-items: center; gap: 2px; font-size: 5px; }
```
